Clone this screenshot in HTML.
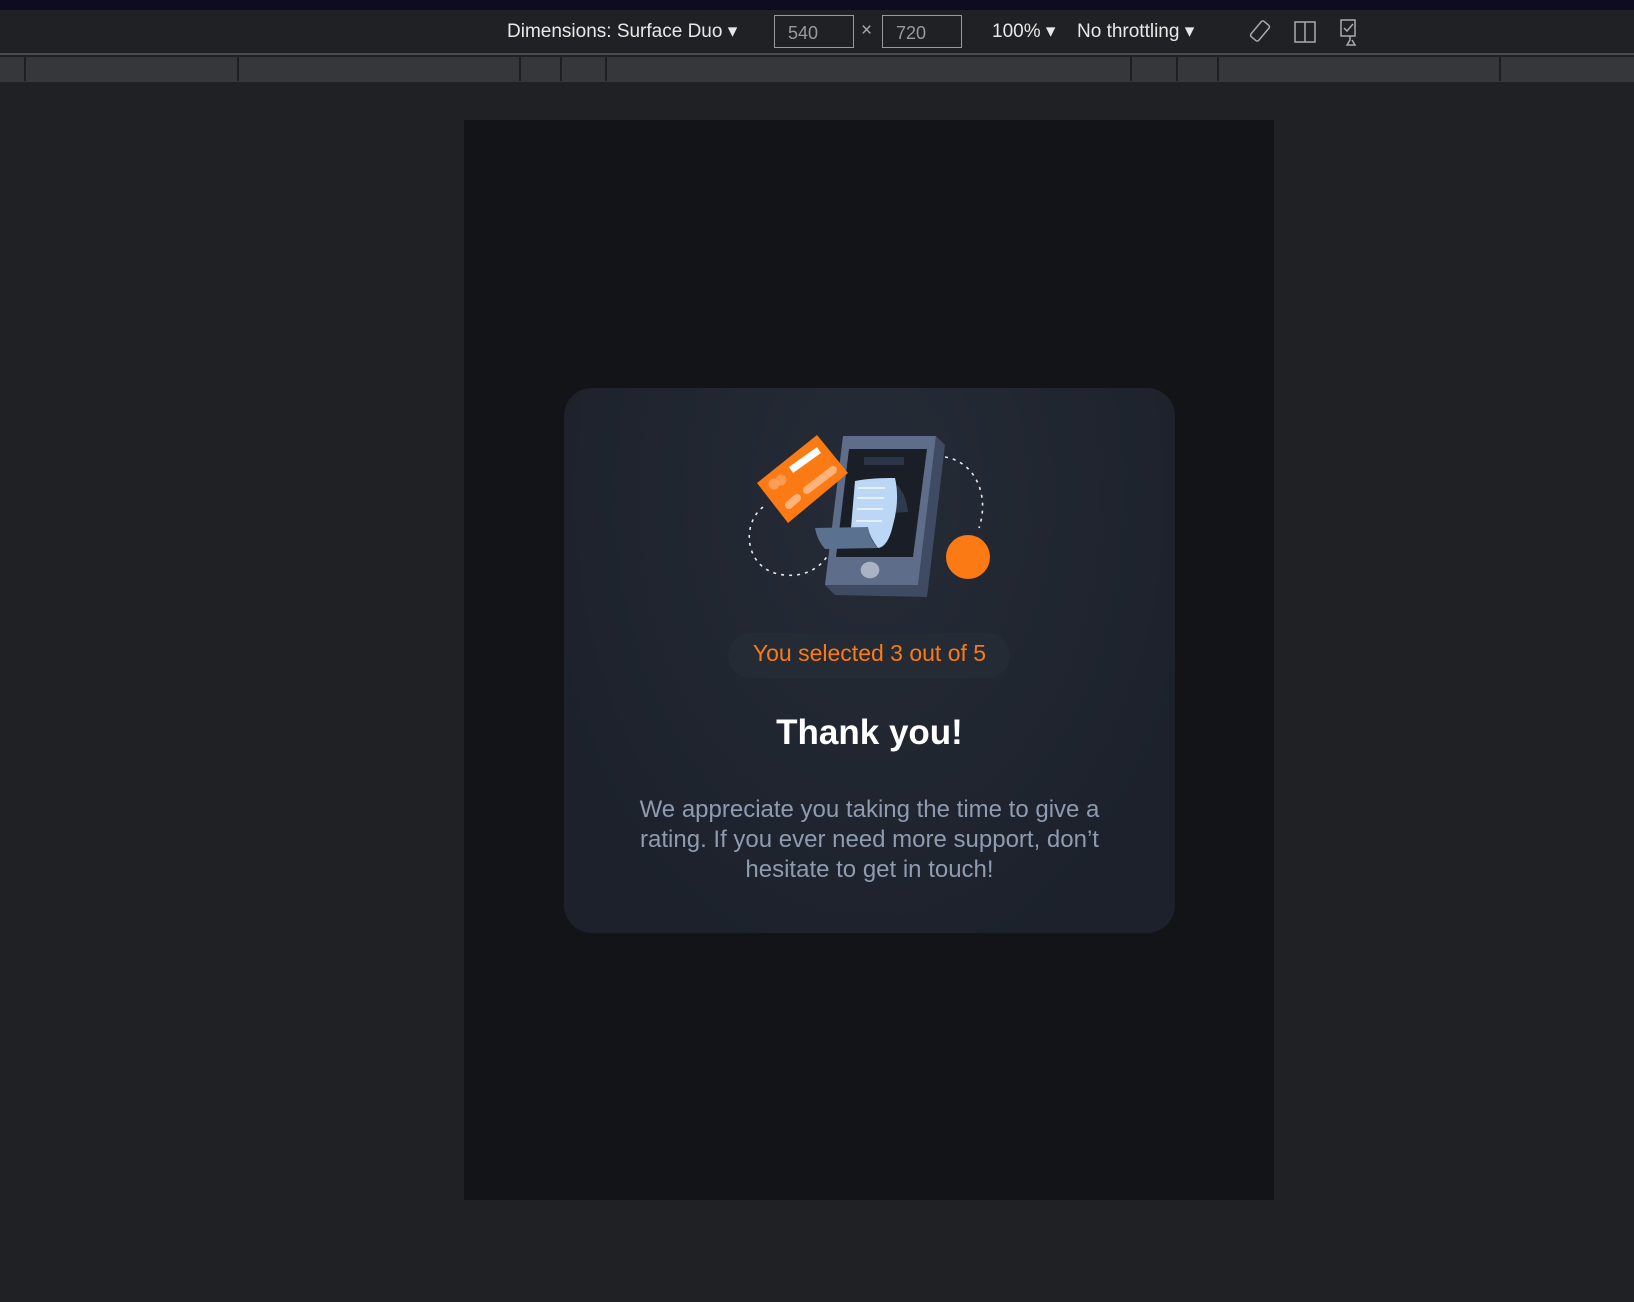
<!DOCTYPE html>
<html><head><meta charset="utf-8"><style>
*{margin:0;padding:0;box-sizing:border-box}
body{width:1634px;height:1302px;background:#202124;position:relative;overflow:hidden;font-family:"Liberation Sans",sans-serif}
.a{position:absolute}
.tb{color:#e8e8e8;font-size:19px;top:20px;white-space:nowrap}
.inp{border:1px solid #9a9a9a;height:33px;top:15px;color:#9a9a9a;font-size:18px;padding:7px 0 0 13px}
.div{position:absolute;top:57px;width:2px;height:24px;background:#1e1f21}
</style></head><body>
<div class="a" style="left:0;top:0;width:1634px;height:10px;background:#0e0d1f"></div>
<div class="a" style="left:0;top:10px;width:1634px;height:43px;background:#202124"></div>
<div class="a" style="left:0;top:53px;width:1634px;height:2px;background:#4a4b4e"></div>
<div class="a" style="left:0;top:57px;width:1634px;height:25px;background:#36373b"></div>
<div class="div" style="left:24px"></div><div class="div" style="left:237px"></div><div class="div" style="left:519px"></div><div class="div" style="left:560px"></div><div class="div" style="left:605px"></div><div class="div" style="left:1130px"></div><div class="div" style="left:1176px"></div><div class="div" style="left:1217px"></div><div class="div" style="left:1499px"></div>
<div class="a tb" style="left:507px">Dimensions: Surface Duo ▾</div>
<div class="a inp" style="left:774px;width:80px">540</div>
<div class="a tb" style="left:861px;color:#aaa">×</div>
<div class="a inp" style="left:882px;width:80px">720</div>
<div class="a tb" style="left:992px">100% ▾</div>
<div class="a tb" style="left:1077px">No throttling ▾</div>
<svg class="a" style="left:1248px;top:18px" width="110" height="28" viewBox="0 0 110 28" fill="none" stroke="#aaa" stroke-width="1.5">
<rect x="7" y="3" width="10" height="20" rx="2" transform="rotate(40 12 13)"/>
<path d="M47 4h20v20h-20zM57 4v20"/>
<path d="M93 2h14v16h-14zM96 10l3 3 6-7M102 18v4l-3 5h8l-3-5"/>
</svg>
<div class="a" style="left:464px;top:120px;width:810px;height:1080px;background:#131418"></div>
<div class="a" style="left:564px;top:388px;width:611px;height:545px;border-radius:28px;background:radial-gradient(ellipse at 50% 20%,#262c37,#1c212b 80%)"></div>
<svg class="a" style="left:700px;top:400px" width="320" height="220" viewBox="0 0 320 220">
<path d="M63,107 C40,125 45,172 85,175 C105,177 120,168 128,155" fill="none" stroke="#e6e9f0" stroke-width="1.6" stroke-dasharray="3 5"/>
<path d="M245,57 C275,62 290,95 279,128" fill="none" stroke="#e6e9f0" stroke-width="1.6" stroke-dasharray="3 5"/>
<polygon points="236,36 245,45 227,197 218,185" fill="#3e4b63"/>
<polygon points="125,185 218,185 227,197 135,195" fill="#3e4b63"/>
<polygon points="143,36 236,36 218,185 125,185" fill="#5e6e8a"/>
<polygon points="149,49 227,49 213,157 136,157" fill="#1a1e27"/>
<rect x="164" y="57" width="40" height="8" fill="#2b3547"/>
<ellipse cx="170" cy="170" rx="9.3" ry="8.3" fill="#aab3c4"/>
<path d="M187,79 Q205,85 208,112 L190,113 Z" fill="#2e3a4e"/>
<path d="M155,81 Q170,78 195,78 Q200,100 193,125 Q188,147 178,148 Q170,138 168,128 L151,128 Z" fill="#bcd6f5"/>
<g stroke="#fff" stroke-width="1.3"><path d="M158,88h27M157,98h27M157,109h26M156,121h26"/></g>
<path d="M115,128 L168,127 Q170,140 178,148 L125,149 Q117,140 115,128Z" fill="#5b7190"/>
<polygon points="57,83 117,35 148,73 88,123" fill="#fb7a14"/>
<polygon points="89,67 117,47 121,53 93,73" fill="#fff"/>
<path d="M107,90 L133,70" stroke="#fdb37a" stroke-width="8" stroke-linecap="round"/>
<path d="M89,105 L97,98" stroke="#fdb37a" stroke-width="8" stroke-linecap="round"/>
<circle cx="74" cy="84" r="5.5" fill="#fda565" opacity=".8"/><circle cx="81" cy="80" r="5.5" fill="#fda565" opacity=".7"/>
<circle cx="268" cy="157" r="22" fill="#fb7a14"/>
</svg>
<div class="a" style="left:728px;top:633px;width:282px;height:45px;border-radius:23px;background:#252b35"></div>
<div class="a" style="left:564px;top:640px;width:611px;text-align:center;color:#fb7a14;font-size:23px">You selected 3 out of 5</div>
<div class="a" style="left:564px;top:713px;width:611px;text-align:center;color:#fff;font-size:35px;font-weight:bold">Thank you!</div>
<div class="a" style="left:564px;top:795px;width:611px;text-align:center;color:#8f9bb0;font-size:24px;line-height:30px">We appreciate you taking the time to give a<br>rating. If you ever need more support, don’t<br>hesitate to get in touch!</div>
</body></html>
